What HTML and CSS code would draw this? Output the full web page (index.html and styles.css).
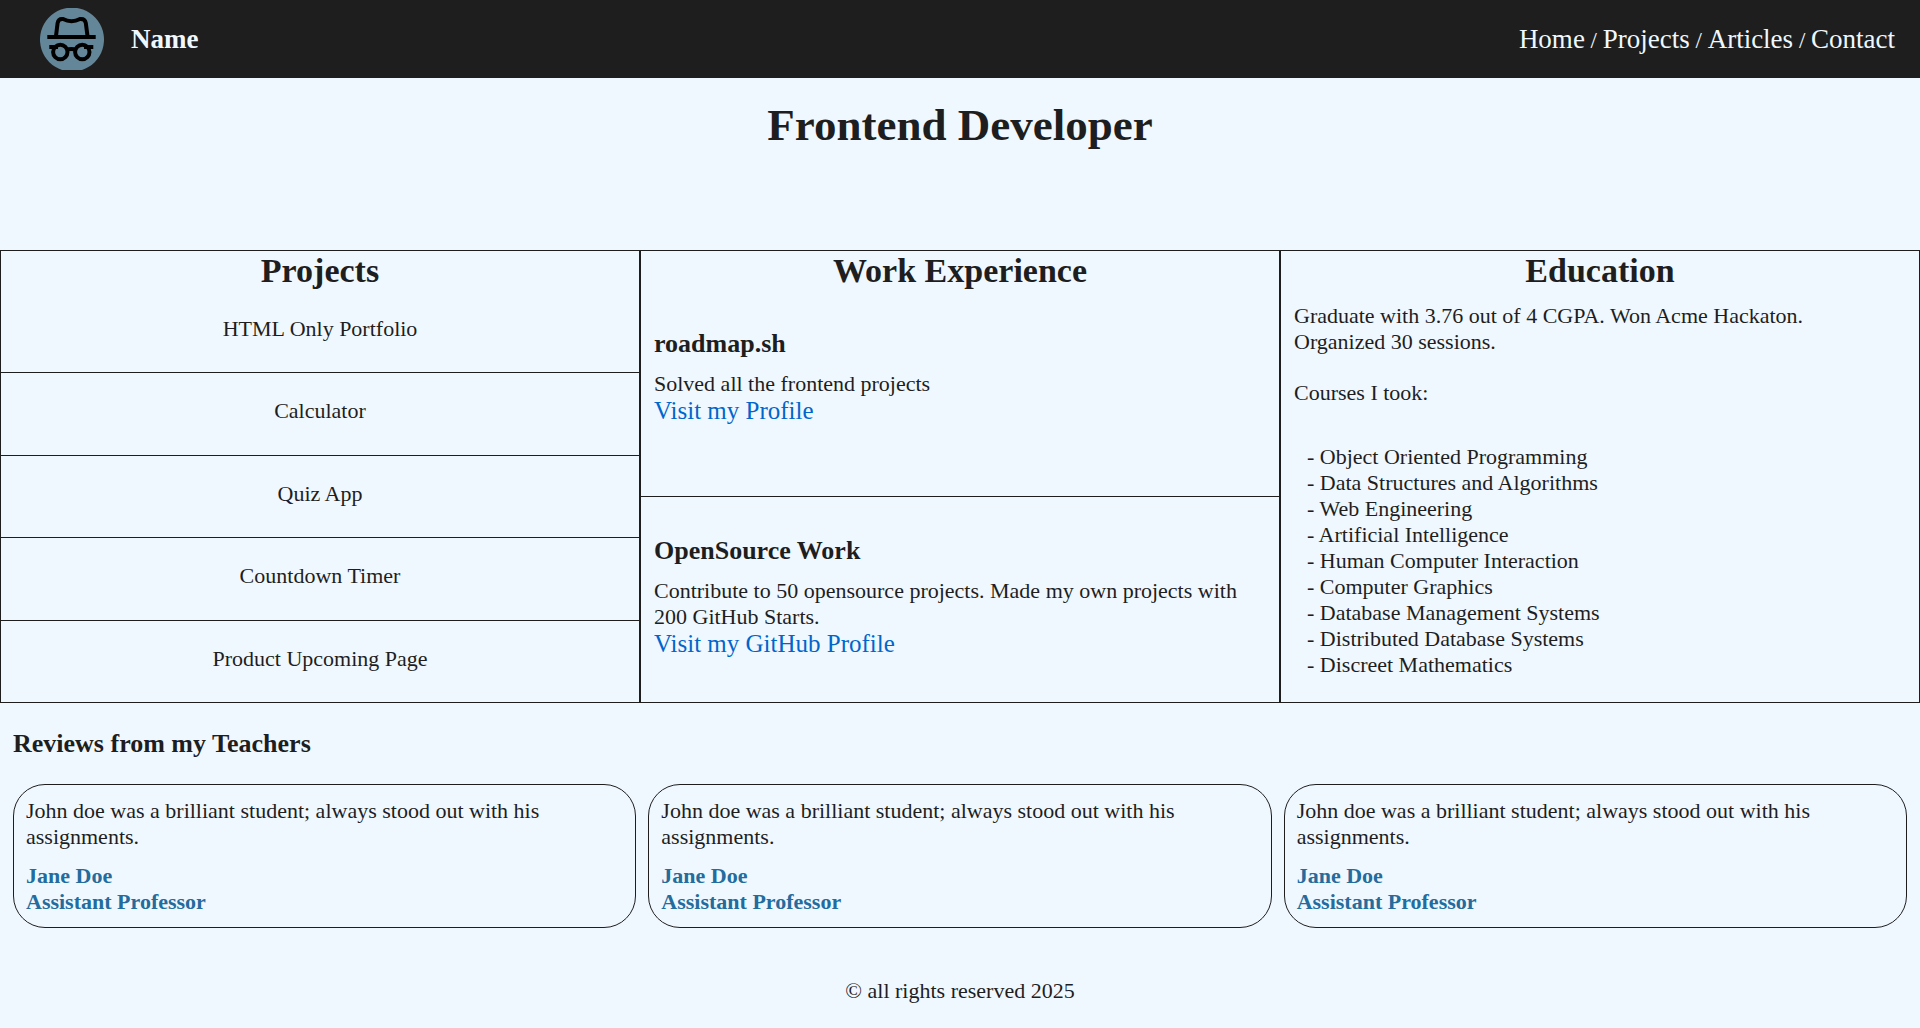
FILE: index.html
```html
<!DOCTYPE html>
<html lang="en">
<head>
  <meta charset="utf-8">
  <meta name="viewport" content="width=device-width, initial-scale=1">
  <title>Frontend Developer</title>
  <link rel="stylesheet" href="styles.css">
</head>
<body>
  <header class="topbar">
    <div class="brand">
      <svg class="logo" viewBox="0 0 64 62" aria-hidden="true">
        <path class="logo-disc" d="M22 62 A32 32 0 1 1 42 62 Z"/>
        <g class="logo-lines">
          <path d="M7.300 29H55.700"/>
          <path d="M16 28L17.600 15Q18.400 10.500 23 11Q31.500 15.500 40 11Q45 10.500 45.800 15L47.500 28"/>
          <path d="M9.300 39H18M44 39H53.300"/>
          <circle cx="20.300" cy="44" r="7.200"/>
          <circle cx="42.300" cy="44" r="7.200"/>
          <path d="M26 42Q31.300 40 36.600 42"/>
        </g>
      </svg>
      <span class="name">Name</span>
    </div>
    <nav class="nav">
      <a href="#home">Home</a><span class="slash"> / </span><a href="#projects">Projects</a><span class="slash"> / </span><a href="#articles">Articles</a><span class="slash"> / </span><a href="#contact">Contact</a>
    </nav>
  </header>

  <main>
    <h1 class="title">Frontend Developer</h1>

    <div class="columns">
      <section class="column" id="projects">
        <h2 class="column-title">Projects</h2>
        <ul class="projects">
          <li>HTML Only Portfolio</li>
          <li>Calculator</li>
          <li>Quiz App</li>
          <li>Countdown Timer</li>
          <li>Product Upcoming Page</li>
        </ul>
      </section>

      <section class="column">
        <h2 class="column-title">Work Experience</h2>
        <article class="job">
          <h3 class="subtitle">roadmap.sh</h3>
          <p>Solved all the frontend projects</p>
          <a class="link" href="#profile">Visit my Profile</a>
        </article>
        <article class="job">
          <h3 class="subtitle">OpenSource Work</h3>
          <p>Contribute to 50 opensource projects. Made my own projects with 200 GitHub Starts.</p>
          <a class="link" href="#github">Visit my GitHub Profile</a>
        </article>
      </section>

      <section class="column">
        <h2 class="column-title">Education</h2>
        <div class="education">
          <p>Graduate with 3.76 out of 4 CGPA. Won Acme Hackaton.<br>Organized 30 sessions.</p>
          <p>Courses I took:</p>
          <ul class="courses">
            <li>- Object Oriented Programming</li>
            <li>- Data Structures and Algorithms</li>
            <li>- Web Engineering</li>
            <li>- Artificial Intelligence</li>
            <li>- Human Computer Interaction</li>
            <li>- Computer Graphics</li>
            <li>- Database Management Systems</li>
            <li>- Distributed Database Systems</li>
            <li>- Discreet Mathematics</li>
          </ul>
        </div>
      </section>
    </div>

    <section class="reviews">
      <h3 class="subtitle">Reviews from my Teachers</h3>
      <div class="cards">
        <article class="card">
          <p>John doe was a brilliant student; always stood out with his assignments.</p>
          <p class="author">Jane Doe<br>Assistant Professor</p>
        </article>
        <article class="card">
          <p>John doe was a brilliant student; always stood out with his assignments.</p>
          <p class="author">Jane Doe<br>Assistant Professor</p>
        </article>
        <article class="card">
          <p>John doe was a brilliant student; always stood out with his assignments.</p>
          <p class="author">Jane Doe<br>Assistant Professor</p>
        </article>
      </div>
    </section>
  </main>

  <footer class="footer">© all rights reserved 2025</footer>
</body>
</html>
```

FILE: styles.css
```css
* {
  box-sizing: border-box;
  margin: 0;
  padding: 0;
}

body {
  background: #f0f8ff;
  color: #1e1e1e;
  font-family: "Liberation Serif", "Times New Roman", serif;
  font-size: 22px;
  line-height: 26px;
}

ul {
  list-style: none;
}

a {
  text-decoration: none;
}

.topbar {
  display: flex;
  align-items: center;
  justify-content: space-between;
  min-height: 78px;
  padding: 8px 25px 8px 40px;
  background: #1e1e1e;
  color: #f0f8ff;
}

.brand {
  display: flex;
  align-items: center;
  gap: 27px;
}

.logo {
  width: 64px;
  height: 62px;
}

.logo-disc {
  fill: #648699;
}

.logo-lines {
  fill: none;
  stroke: #000;
  stroke-width: 4;
}

.name {
  font-size: 27px;
  font-weight: bold;
}

.nav {
  font-size: 27px;
}

.nav a {
  color: inherit;
}

.slash {
  font-size: 23px;
  line-height: 1;
}

.title {
  padding: 22px 0 100px;
  font-size: 45px;
  line-height: 50px;
  text-align: center;
}

.columns {
  display: grid;
  grid-template-columns: repeat(3, 1fr);
}

.column {
  display: flex;
  flex-direction: column;
  border: 1px solid #1e1e1e;
}

.column-title {
  font-size: 34px;
  line-height: 39px;
  text-align: center;
}

.projects {
  display: flex;
  flex: 1;
  flex-direction: column;
}

.projects li {
  flex: 1;
  padding: 26px 0;
  text-align: center;
}

.projects li + li {
  padding-top: 25px;
  border-top: 1px solid #1e1e1e;
}

.job {
  flex: 1;
  padding: 39px 13px 26px;
}

.job + .job {
  border-top: 1px solid #1e1e1e;
}

.subtitle {
  font-size: 26px;
  line-height: 30px;
}

.job .subtitle {
  margin-bottom: 12px;
}

.link {
  display: block;
  color: #0066cc;
  font-size: 25px;
  line-height: 28px;
}

.education {
  display: grid;
  gap: 25px;
  padding: 13px;
}

.courses {
  padding: 13px 13px 11px;
}

.reviews {
  padding: 26px 13px 0;
}

.cards {
  display: grid;
  grid-template-columns: repeat(3, 1fr);
  gap: 12px;
  margin-top: 25px;
}

.card {
  padding: 13px 12px 12px;
  border: 1px solid #1e1e1e;
  border-radius: 32px;
}

.author {
  margin-top: 13px;
  color: #236c9d;
  font-weight: bold;
}

.footer {
  padding: 50px 0 24px;
  text-align: center;
}
```
